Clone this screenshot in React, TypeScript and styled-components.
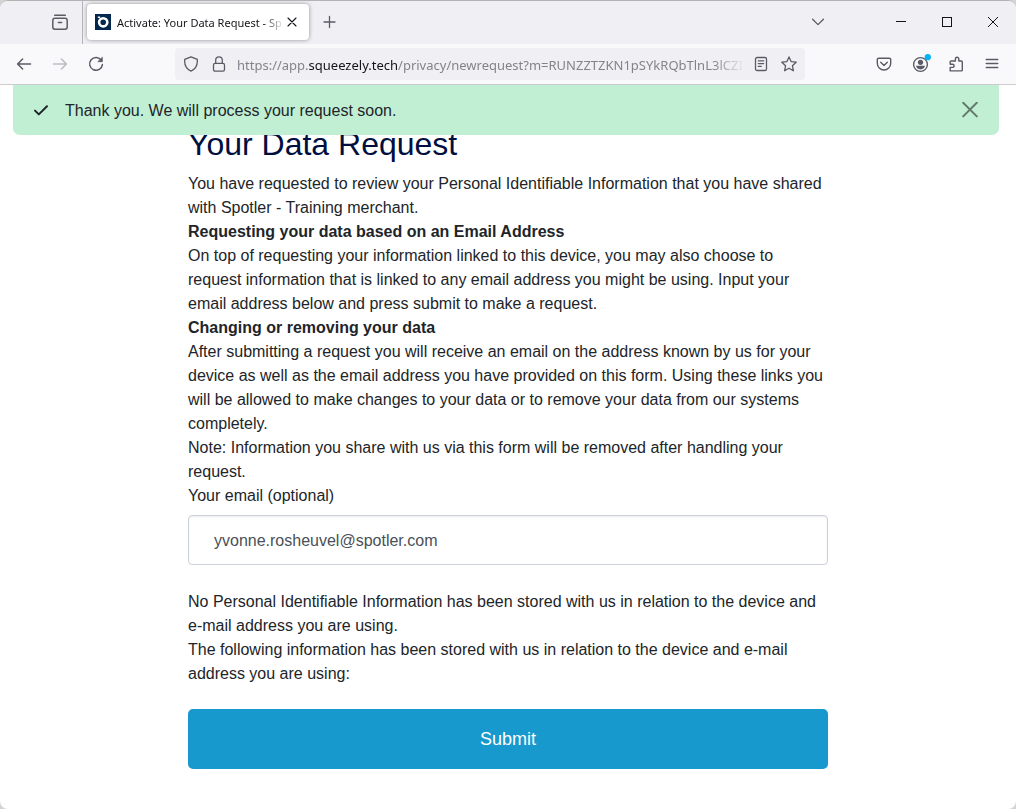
import React from "react";
import styled, { createGlobalStyle } from "styled-components";

const GlobalStyle = createGlobalStyle`
  *, *::before, *::after { box-sizing: border-box; }
  body {
    margin: 0;
    background: #d4d4d4;
    color: #212529;
    font: 16px/24px "Liberation Sans", Arial, sans-serif;
  }
  button, input { font: inherit; color: inherit; }
`;

const uiFont = `"Noto Sans", "Open Sans", sans-serif`;

const BrowserWindow = styled.div`
  display: flex;
  flex-direction: column;
  min-height: 100vh;
  border-top: 1px solid #b4b4b4;
  border-radius: 8px;
  background: #fff;
  overflow: hidden;
`;

const TabStrip = styled.div`
  display: flex;
  align-items: center;
  height: 43px;
  padding: 0 0 1px 42px;
  background: #f0eff4;
  color: #5b5b66;
  font-family: ${uiFont};
`;

const IconButton = styled.button<{ $width?: number }>`
  display: flex;
  flex: none;
  align-items: center;
  justify-content: center;
  width: ${(p) => p.$width ?? 36}px;
  height: 32px;
  padding: 0;
  border: 0;
  background: none;
  color: inherit;

  &:disabled { color: #bcbcc2; }
`;

const Separator = styled.span`
  flex: none;
  align-self: flex-start;
  width: 1px;
  height: 43px;
  margin: 0 4px;
  background: #b4b4b9;
`;

const Tab = styled.div`
  display: flex;
  flex: 0 1 222px;
  align-items: center;
  min-width: 0;
  height: 36px;
  padding: 0 9px 0 8px;
  border-radius: 4px;
  background: #fff;
  box-shadow: 0 0 4px rgba(0, 0, 0, 0.4);
  color: #15141a;
`;

const TabTitle = styled.span`
  flex: 1;
  min-width: 0;
  margin-left: 6px;
  padding-top: 2px;
  overflow: hidden;
  white-space: nowrap;
  font-size: 11px;
  line-height: 20px;
  mask-image: linear-gradient(to left, transparent, #000 20px);
`;

const NewTab = styled(IconButton)`
  margin-left: 6px;
`;

const TabList = styled(IconButton)`
  margin: 0 42px 0 auto;
`;

const WindowControls = styled.div`
  display: flex;
  color: #15141a;
`;

const Toolbar = styled.div`
  display: flex;
  align-items: center;
  height: 41px;
  padding: 0 6px;
  border-bottom: 1px solid #cccccf;
  background: #f9f9fb;
  color: #5b5b66;
`;

const AddressBar = styled.div`
  display: flex;
  flex: 1;
  align-items: center;
  min-width: 0;
  height: 32px;
  margin: 0 61px;
  padding: 0 2px;
  border-radius: 4px;
  background: #f0eff4;
`;

const Url = styled.div`
  flex: 1;
  min-width: 0;
  margin: 0 2px 0 4px;
  padding-top: 2px;
  overflow: hidden;
  white-space: nowrap;
  font-family: ${uiFont};
  font-size: 13px;
  line-height: 24px;
  color: #84838a;
  mask-image: linear-gradient(to left, transparent, #000 32px);
`;

const Host = styled.span`
  color: #15141a;
`;

const Page = styled.main`
  position: relative;
  flex: 1;
  padding: 40px 24px;
`;

const Alert = styled.div`
  position: absolute;
  top: 0;
  left: 13px;
  right: 17px;
  display: flex;
  align-items: center;
  height: 50px;
  padding: 0 11px 0 20px;
  border-radius: 0 0 7px 7px;
  background: #c1efd4;
`;

const AlertText = styled.p`
  flex: 1;
  margin: 0 0 0 16px;
  padding-top: 2px;
`;

const Dismiss = styled(IconButton)`
  color: #617a6b;
`;

const Column = styled.form`
  max-width: 640px;
  margin: 0 auto;
`;

const Title = styled.h1`
  margin: 0 0 9px;
  color: #000f40;
  font-size: 32px;
  font-weight: 400;
  line-height: 38px;
`;

const Subtitle = styled.h2`
  margin: 0;
  font-size: 16px;
  font-weight: 700;
  line-height: 24px;
`;

const Paragraph = styled.p`
  margin: 0;
`;

const Label = styled.label`
  display: block;
  margin-bottom: 7px;
`;

const EmailInput = styled.input`
  display: block;
  width: 100%;
  height: 50px;
  margin-bottom: 25px;
  padding: 2px 25px 0;
  border: 1px solid #cdd1da;
  border-radius: 4px;
  background: #fff;
  box-shadow: inset 0 1px 2px rgba(0, 0, 0, 0.08);
  color: #495057;
`;

const Submit = styled.button`
  display: block;
  width: 100%;
  height: 60px;
  margin-top: 23px;
  border: 0;
  border-radius: 5px;
  background: #1899cd;
  color: #fff;
  font-size: 18px;
`;

type IconProps = {
  size?: number;
  width?: number;
  children: React.ReactNode;
};

const Icon = ({ size = 16, width = 1.3, children }: IconProps) => (
  <svg
    width={size}
    height={size}
    viewBox={`0 0 ${size} ${size}`}
    fill="none"
    stroke="currentColor"
    strokeWidth={width}
    strokeLinecap="round"
    strokeLinejoin="round"
    aria-hidden="true"
  >
    {children}
  </svg>
);

const Favicon = () => (
  <svg width="16" height="16" viewBox="0 0 16 16" fill="none" aria-hidden="true">
    <rect width="16" height="16" fill="#04284d" />
    <circle cx="8.2" cy="8.3" r="4.1" stroke="#fff" strokeWidth="2.6" />
    <path d="M2.8 3.2h2.4" stroke="#fff" strokeWidth="1.4" />
  </svg>
);

export default function App() {
  return (
    <>
      <GlobalStyle />
      <BrowserWindow>
        <TabStrip>
          <IconButton aria-label="Recent browsing">
            <Icon width={1.5}>
              <path d="M2.7 1.2h10.6" />
              <rect x="0.8" y="4.2" width="14.4" height="11" rx="2.2" />
              <path d="M6.4 8.6h3.2" />
            </Icon>
          </IconButton>
          <Separator />
          <Tab>
            <Favicon />
            <TabTitle>Activate: Your Data Request - Sp</TabTitle>
            <IconButton $width={16} aria-label="Close tab">
              <Icon size={10} width={1.1}>
                <path d="M1 1l8 8M9 1l-8 8" />
              </Icon>
            </IconButton>
          </Tab>
          <NewTab $width={28} aria-label="New tab">
            <Icon size={14} width={1.3}>
              <path d="M7.5 1.5v11M2 7h11" />
            </Icon>
          </NewTab>
          <TabList aria-label="List all tabs">
            <Icon size={14}>
              <path d="M1.6 4.2L7 9.6l5.4-5.4" />
            </Icon>
          </TabList>
          <WindowControls>
            <IconButton $width={46} aria-label="Minimize">
              <Icon size={10} width={1}>
                <path d="M0 4.5h10" strokeLinecap="butt" />
              </Icon>
            </IconButton>
            <IconButton $width={46} aria-label="Maximize">
              <Icon size={10} width={1}>
                <rect x="0.5" y="0.5" width="9" height="9" strokeLinejoin="miter" />
              </Icon>
            </IconButton>
            <IconButton $width={46} aria-label="Close window">
              <Icon size={10} width={1}>
                <path d="M0.3 0.3l9.4 9.4M9.7 0.3L0.3 9.7" />
              </Icon>
            </IconButton>
          </WindowControls>
        </TabStrip>

        <Toolbar>
          <IconButton aria-label="Back">
            <Icon width={1.5}>
              <path d="M14.5 8H1.7M6.6 3L1.6 8l5 5" />
            </Icon>
          </IconButton>
          <IconButton aria-label="Forward" disabled>
            <Icon width={1.5}>
              <path d="M1.5 8h12.8M9.4 3l5 5-5 5" />
            </Icon>
          </IconButton>
          <IconButton aria-label="Reload">
            <Icon width={1.5}>
              <path d="M13.4 4.4A6.4 6.4 0 1 0 14.4 8.6" />
              <path d="M14.3 1.6v4.1h-4.1z" fill="currentColor" strokeWidth="0.8" />
            </Icon>
          </IconButton>

          <AddressBar>
            <IconButton $width={28} aria-label="Tracking protection">
              <Icon>
                <path d="M8 0.9l6.3 2.5v2.2c0 4.4-2.3 7.7-6.3 9.5C4 13.3 1.7 10 1.7 5.6V3.4z" />
              </Icon>
            </IconButton>
            <IconButton $width={28} aria-label="Site information">
              <Icon>
                <rect x="2.5" y="7.4" width="11" height="7.8" rx="1.6" />
                <path d="M4.7 7.2V4.2a3.3 3.3 0 0 1 6.6 0v3" />
              </Icon>
            </IconButton>
            <Url role="textbox" aria-label="Address" contentEditable suppressContentEditableWarning spellCheck={false}>
              https://app.<Host>squeezely.tech</Host>
              /privacy/newrequest?m=RUNZZTZKN1pSYkRQbTlnL3lCZI
            </Url>
            <IconButton $width={28} aria-label="Reader view">
              <Icon>
                <rect x="2.5" y="1.5" width="11" height="13" rx="1.6" />
                <path d="M5.3 4.8h5.4M5.3 7.6h5.4M5.3 10.4h3" />
              </Icon>
            </IconButton>
            <IconButton $width={28} aria-label="Bookmark this page">
              <Icon>
                <path d="M8 0.9l2.1 4.7 5.1.6-3.8 3.5 1 5.1L8 12.3l-4.4 2.5 1-5.1L.8 6.2l5.1-.6z" />
              </Icon>
            </IconButton>
          </AddressBar>

          <IconButton aria-label="Save to Pocket">
            <Icon width={1.4}>
              <path d="M2.7 2.2h10.6a1.4 1.4 0 0 1 1.4 1.4v3.7a6.7 6.7 0 0 1-13.4 0V3.6a1.4 1.4 0 0 1 1.4-1.4z" />
              <path d="M4.7 6.3L8 9.4l3.3-3.1" />
            </Icon>
          </IconButton>
          <IconButton aria-label="Account">
            <svg width="22" height="20" viewBox="0 0 22 20" fill="none" aria-hidden="true">
              <circle cx="11.5" cy="10.5" r="6.9" stroke="currentColor" strokeWidth="1.4" />
              <circle cx="11.5" cy="8.3" r="2.6" fill="currentColor" />
              <path d="M7 11.8h9c-.4 2.3-2.3 3.6-4.500 3.600s-4.100-1.300-4.500-3.600z" fill="currentColor" />
              <circle cx="18.8" cy="3.2" r="3.1" fill="#00b3f4" />
            </svg>
          </IconButton>
          <IconButton aria-label="Extensions">
            <Icon width={1.4}>
              <path d="M2.2 14.9h11.2a.9.9 0 0 0 .9-.9V5.9a.9.9 0 0 0-.9-.9H10.800V2.900a1.700 1.700 0 0 0-3.400 0V5H3.100a.9.9 0 0 0-.9.9v2.300h2.300a1.600 1.600 0 0 1 0 3.200H2.200z" />
            </Icon>
          </IconButton>
          <IconButton aria-label="Open application menu">
            <Icon width={1.3}>
              <path d="M2.2 3.500h11.600M2.2 7.500h11.600M2.2 11.500h11.600" />
            </Icon>
          </IconButton>
        </Toolbar>

        <Page>
          <Column onSubmit={(event) => event.preventDefault()}>
            <Title>Your Data Request</Title>
            <Paragraph>
              You have requested to review your Personal Identifiable Information that you have shared with
              Spotler - Training merchant.
            </Paragraph>
            <Subtitle>Requesting your data based on an Email Address</Subtitle>
            <Paragraph>
              On top of requesting your information linked to this device, you may also choose to request
              information that is linked to any email address you might be using. Input your email address
              below and press submit to make a request.
            </Paragraph>
            <Subtitle>Changing or removing your data</Subtitle>
            <Paragraph>
              After submitting a request you will receive an email on the address known by us for your device
              as well as the email address you have provided on this form. Using these links you will be
              allowed to make changes to your data or to remove your data from our systems completely.
            </Paragraph>
            <Paragraph>
              Note: Information you share with us via this form will be removed after handling your request.
            </Paragraph>
            <Label htmlFor="email">Your email (optional)</Label>
            <EmailInput id="email" type="email" defaultValue="yvonne.rosheuvel@spotler.com" />
            <Paragraph>
              No Personal Identifiable Information has been stored with us in relation to the device and
              e-mail address you are using.
            </Paragraph>
            <Paragraph>
              The following information has been stored with us in relation to the device and e-mail address
              you are using:
            </Paragraph>
            <Submit type="submit">Submit</Submit>
          </Column>

          <Alert role="alert">
            <Icon width={2}>
              <path d="M2 8.6l3.8 3.8 8.2-8.2" />
            </Icon>
            <AlertText>Thank you. We will process your request soon.</AlertText>
            <Dismiss aria-label="Dismiss">
              <Icon width={2}>
                <path d="M1.2 0.8l13.6 13.6M14.8 0.8L1.2 14.4" />
              </Icon>
            </Dismiss>
          </Alert>
        </Page>
      </BrowserWindow>
    </>
  );
}
